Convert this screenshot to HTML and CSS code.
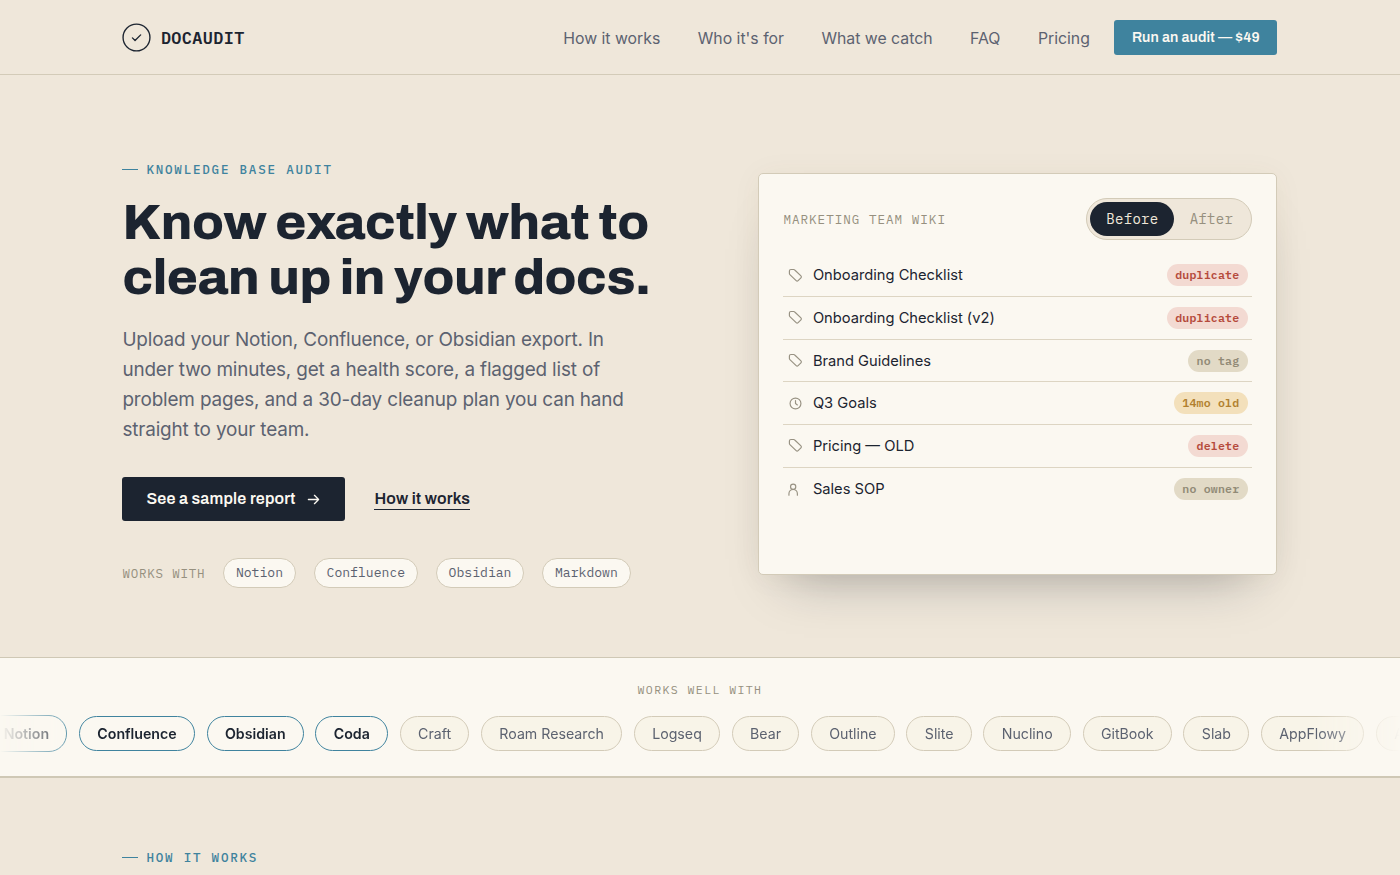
FILE: index.html
```
<!DOCTYPE html>
<html lang="en">
<head>
  <meta charset="UTF-8" />
  <meta name="viewport" content="width=device-width, initial-scale=1" />
  <title>DocAudit</title>
  <link rel="stylesheet" href="styles.css">
</head>
<body>
  <!-- Shared row icons -->
  <svg class="sprite" aria-hidden="true">
    <symbol id="tag" viewBox="0 0 16 16">
      <path d="M1.500 5.800V3.200c0-.9.7-1.600 1.600-1.600h3c.4 0 .8.2 1.100.5l6.600 6.300c.6.6.6 1.500 0 2.100l-3 3c-.6.6-1.500.6-2.100 0L2 7c-.3-.3-.5-.7-.5-1.200z" />
    </symbol>
    <symbol id="clock" viewBox="0 0 16 16">
      <circle cx="8" cy="8" r="5.800" />
      <path d="M8 4.800V8l2 1.500" />
    </symbol>
    <symbol id="person" viewBox="0 0 16 16">
      <circle cx="5.500" cy="5" r="2.800" />
      <path d="M1 14v-1.500a4.500 4.500 0 0 1 9 0V14" />
    </symbol>
  </svg>

  <header class="nav">
    <div class="wrap nav-inner">
      <a class="logo" href="#">
        <svg class="logo-mark" viewBox="0 0 30 30">
          <circle cx="15" cy="15" r="13.900" />
          <path d="M10.800 15.400l2.700 2.700 5.800-5.800" />
        </svg>
        <span>DOCAUDIT</span>
      </a>
      <nav class="links">
        <a href="#how">How it works</a>
        <a href="#who">Who it's for</a>
        <a href="#catch">What we catch</a>
        <a href="#faq">FAQ</a>
        <a href="#pricing">Pricing</a>
      </nav>
      <a class="nav-cta" href="#pricing">Run an audit — $49</a>
    </div>
  </header>

  <section class="wrap hero">
    <div class="hero-copy">
      <div class="eyebrow">Knowledge base audit</div>
      <h1>Know exactly what to<br>clean up in your docs.</h1>
      <p class="lede">Upload your Notion, Confluence, or Obsidian export. In<br>under two minutes, get a health score, a flagged list of<br>problem pages, and a 30-day cleanup plan you can hand<br>straight to your team.</p>
      <div class="actions">
        <a class="btn" href="#sample">
          <span>See a sample report</span>
          <svg class="arrow" viewBox="0 0 14 14"><path d="M1.500 7h11M8 2.500L12.500 7 8 11.500" /></svg>
        </a>
        <a class="text-link" href="#how">How it works</a>
      </div>
      <div class="formats">
        <span class="formats-label">Works with</span>
        <span class="format">Notion</span>
        <span class="format">Confluence</span>
        <span class="format">Obsidian</span>
        <span class="format">Markdown</span>
      </div>
    </div>

    <div class="card">
      <div class="card-head">
        <span class="card-title">Marketing team wiki</span>
        <div class="toggle">
          <button class="on">Before</button>
          <button>After</button>
        </div>
      </div>
      <ul class="pages">
        <li><svg class="icon"><use href="#tag" /></svg><span>Onboarding Checklist</span><b class="badge red">duplicate</b></li>
        <li><svg class="icon"><use href="#tag" /></svg><span>Onboarding Checklist (v2)</span><b class="badge red">duplicate</b></li>
        <li><svg class="icon"><use href="#tag" /></svg><span>Brand Guidelines</span><b class="badge grey">no tag</b></li>
        <li><svg class="icon"><use href="#clock" /></svg><span>Q3 Goals</span><b class="badge amber">14mo old</b></li>
        <li><svg class="icon"><use href="#tag" /></svg><span>Pricing — OLD</span><b class="badge red">delete</b></li>
        <li><svg class="icon"><use href="#person" /></svg><span>Sales SOP</span><b class="badge grey">no owner</b></li>
      </ul>
    </div>
  </section>

  <section class="band">
    <div class="band-label">Works well with</div>
    <div class="marquee">
      <span class="tool main current">Notion</span>
      <span class="tool main">Confluence</span>
      <span class="tool main">Obsidian</span>
      <span class="tool main">Coda</span>
      <span class="tool">Craft</span>
      <span class="tool">Roam Research</span>
      <span class="tool">Logseq</span>
      <span class="tool">Bear</span>
      <span class="tool">Outline</span>
      <span class="tool">Slite</span>
      <span class="tool">Nuclino</span>
      <span class="tool">GitBook</span>
      <span class="tool">Slab</span>
      <span class="tool">AppFlowy</span>
      <span class="tool">Anytype</span>
    </div>
  </section>

  <section class="how" id="how">
    <div class="wrap">
      <div class="eyebrow">How it works</div>
    </div>
  </section>
</body>
</html>
```

FILE: styles.css
```
:root {
  --bg: #efe7da;
  --paper: #fbf8f1;
  --ink: #1c2430;
  --muted: #5c6270;
  --faint: #96907f;
  --line: #d3cbb8;
  --teal: #3f839e;
  --mono: "IBM Plex Mono", "Liberation Mono", monospace;
  --display: Archivo, "Liberation Sans", Arial, sans-serif;
}

* {
  box-sizing: border-box;
}

body {
  margin: 0;
  height: 875px;
  overflow: hidden;
  background: var(--bg);
  color: var(--ink);
  font-family: Inter, sans-serif;
}

a {
  color: inherit;
  text-decoration: none;
}

svg {
  fill: none;
  stroke: currentColor;
  stroke-linecap: round;
  stroke-linejoin: round;
}

.sprite {
  display: none;
}

.wrap {
  width: 1155px;
  margin: 0 0 0 122.4px;
}

/* Nav */
.nav {
  height: 75px;
  border-bottom: 1px solid var(--line);
}

.nav-inner {
  height: 74px;
  display: flex;
  align-items: center;
}

.logo {
  display: flex;
  align-items: center;
  gap: 9.5px;
  font-family: var(--mono);
  font-size: 16.8px;
  font-weight: 600;
  letter-spacing: 0.4px;
}

.logo span {
  padding-top: 2px;
}

.logo-mark {
  width: 29px;
  height: 29px;
  stroke-width: 1.4;
}

.links {
  margin-left: auto;
  padding-top: 2px;
  display: flex;
  gap: 37.5px;
  color: var(--muted);
  font-size: 15.8px;
}

.nav-cta {
  width: 163px;
  height: 35px;
  margin-left: 24.5px;
  border-radius: 3px;
  background: var(--teal);
  color: #fbf8f1;
  font: 600 14.2px/35px var(--display);
  letter-spacing: 0.17px;
  text-align: center;
}

/* Hero */
.hero {
  height: 582px;
  padding-top: 84px;
  display: grid;
  grid-template-columns: 1fr 519px;
  align-items: start;
}

.eyebrow {
  display: flex;
  align-items: center;
  gap: 8px;
  color: var(--teal);
  font: 500 12.6px/20px var(--mono);
  letter-spacing: 1.76px;
  text-transform: uppercase;
}

.eyebrow::before {
  content: "";
  width: 16px;
  height: 1px;
  background: var(--teal);
}

h1 {
  margin: 16px 0 0;
  font: 800 50.4px/55px var(--display);
  letter-spacing: -0.5px;
  white-space: nowrap;
}

.lede {
  margin: 20px 0 0;
  color: var(--muted);
  font-size: 18.9px;
  line-height: 29.9px;
  letter-spacing: -0.15px;
  white-space: nowrap;
}

.actions {
  margin-top: 32px;
  display: flex;
  align-items: center;
  gap: 29px;
}

.btn {
  width: 223px;
  height: 44px;
  padding: 0 24px;
  display: flex;
  align-items: center;
  justify-content: space-between;
  border-radius: 3px;
  background: var(--ink);
  color: #fbf8f1;
  font: 600 16px/44px var(--display);
  letter-spacing: 0.2px;
  white-space: nowrap;
}

.arrow {
  width: 13px;
  height: 13px;
  margin: 1px 1px 0 0;
  stroke-width: 1.4;
}

.text-link {
  border-bottom: 1px solid var(--ink);
  font: 600 16px/21px var(--display);
  letter-spacing: 0.2px;
}

.formats {
  margin-top: 37px;
  display: flex;
  align-items: center;
  gap: 17.5px;
  font-family: var(--mono);
}

.formats-label {
  color: var(--faint);
  font-size: 12.5px;
  letter-spacing: 0.8px;
  text-transform: uppercase;
}

.format {
  height: 30px;
  padding: 0 12px;
  border: 1px solid var(--line);
  border-radius: 15px;
  background: var(--paper);
  color: var(--muted);
  font-size: 13.1px;
  line-height: 28px;
}

/* Report card */
.card {
  height: 402px;
  margin-top: 14px;
  padding: 24px;
  border: 1px solid var(--line);
  border-radius: 5px;
  background: var(--paper);
  box-shadow: 0 30px 50px -28px rgba(28, 36, 48, 0.34), 0 2px 30px rgba(90, 70, 30, 0.05);
}

.card-head {
  display: flex;
  align-items: center;
  justify-content: space-between;
  font-family: var(--mono);
}

.card-title {
  color: var(--faint);
  font-size: 12.6px;
  letter-spacing: 1px;
  text-transform: uppercase;
}

.toggle {
  display: flex;
  width: 166px;
  height: 42px;
  padding: 3px;
  border: 1px solid var(--line);
  border-radius: 21px;
  background: var(--bg);
}

.toggle button {
  flex: 1;
  height: 34px;
  padding: 0;
  border: 0;
  border-radius: 17px;
  background: none;
  color: var(--faint);
  font: 400 14px var(--mono);
  letter-spacing: 0.3px;
}

.toggle .on {
  flex: 0 0 84px;
  background: var(--ink);
  color: #efe7da;
}

.pages {
  margin: 14.3px 0 0;
  padding: 0;
  list-style: none;
}

.pages li {
  height: 42.7px;
  padding: 1px 4.500px;
  display: flex;
  align-items: center;
  border-bottom: 1px solid #ddd5c3;
  font-size: 14.7px;
}

.pages li:last-child {
  border-bottom: 0;
}

.icon {
  width: 15px;
  height: 15px;
  margin-right: 10px;
  color: #989283;
  stroke-width: 1.25;
}

.badge {
  height: 22px;
  margin-left: auto;
  padding: 0 8.6px;
  border-radius: 11px;
  font: 600 11.55px/22px var(--mono);
  letter-spacing: 0.2px;
}

.red {
  background: #f3dad2;
  color: #b54a3c;
}

.grey {
  background: #e2dac6;
  color: #918a76;
}

.amber {
  background: #f3e0bb;
  color: #b1802f;
}

/* Tools band */
.band {
  height: 121px;
  padding-top: 22px;
  border-top: 1px solid #cfc8b5;
  border-bottom: 2px solid #cfc8b5;
  background: var(--paper);
  overflow: hidden;
}

.band-label {
  color: var(--faint);
  font: 400 11.55px/20px var(--mono);
  letter-spacing: 1.4px;
  text-align: center;
  text-transform: uppercase;
}

.marquee {
  height: 39px;
  margin-top: 14px;
  display: flex;
  align-items: center;
  gap: 11.5px;
  overflow: hidden;
  mask-image: linear-gradient(90deg, transparent, #000 84px, #000 1316px, transparent);
}

.tool {
  flex: none;
  height: 35px;
  padding: 0 17.35px;
  border: 1px solid var(--line);
  border-radius: 18px;
  background: #f8f4e8;
  color: var(--muted);
  font-size: 14.2px;
  line-height: 34px;
}

.main {
  border-color: var(--teal);
  background: var(--paper);
  color: var(--ink);
  font-weight: 600;
}

.current {
  height: 37px;
  margin-left: -14.7px;
  line-height: 36px;
}

.how {
  padding-top: 69px;
}
```
